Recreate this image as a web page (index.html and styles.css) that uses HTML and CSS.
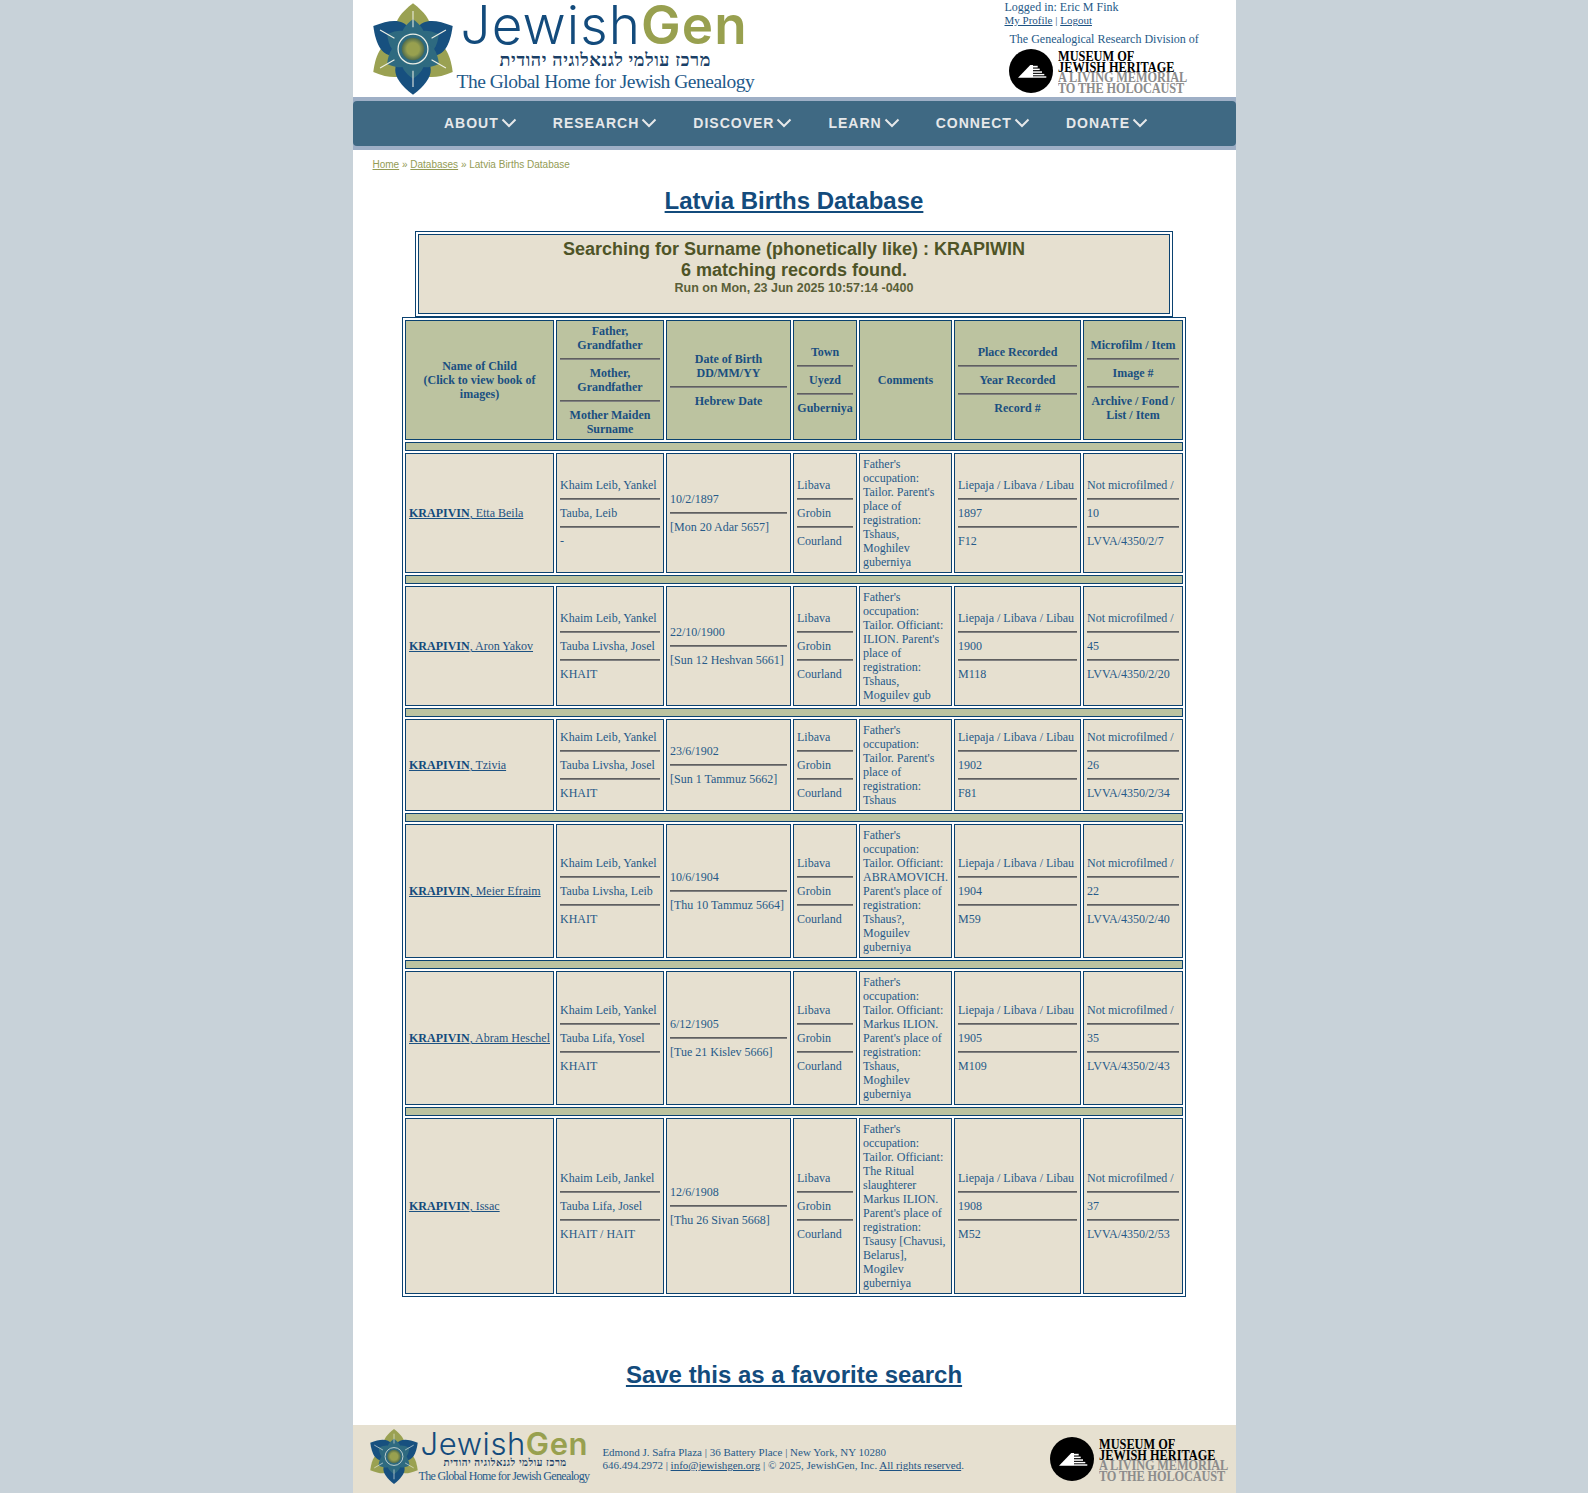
FILE: index.html
```html
<!DOCTYPE html>
<html lang="en">
  <head>
    <meta charset="UTF-8" />
    <meta name="viewport" content="width=device-width, initial-scale=1.0" />
    <title>Latvia Births Database</title>
    <link rel="stylesheet" href="styles.css">
  </head>
  <body>
    <svg class="defs" width="0" height="0" aria-hidden="true">
      <defs>
        <radialGradient id="seed">
          <stop offset="0.55" stop-color="#98a04f" />
          <stop offset="1" stop-color="#4f6a4c" />
        </radialGradient>
        <path id="petal" d="M0,0 C-23,-12 -23,-27 0,-44.5 C23,-27 23,-12 0,0 Z" />
        <path id="petal-inner" d="M0,0 C-15,-7 -15,-18 0,-29 C15,-18 15,-7 0,0 Z" />
        <symbol id="star" viewBox="5 3 80 92">
          <g transform="translate(45 49) scale(1.03)">
            <use href="#petal" fill="#9aa152" />
            <use href="#petal" fill="#9aa152" transform="rotate(120)" />
            <use href="#petal" fill="#9aa152" transform="rotate(240)" />
            <use href="#petal" fill="#17507f" transform="rotate(60)" />
            <use href="#petal" fill="#17507f" transform="rotate(180)" />
            <use href="#petal" fill="#17507f" transform="rotate(300)" />
            <use href="#petal-inner" fill="#2e6a80" />
            <use href="#petal-inner" fill="#2e6a80" transform="rotate(60)" />
            <use href="#petal-inner" fill="#2e6a80" transform="rotate(120)" />
            <use href="#petal-inner" fill="#2e6a80" transform="rotate(180)" />
            <use href="#petal-inner" fill="#2e6a80" transform="rotate(240)" />
            <use href="#petal-inner" fill="#2e6a80" transform="rotate(300)" />
            <g stroke="#eef0e6" stroke-width="1">
              <line x1="0" y1="-21" x2="0" y2="-37" />
              <line x1="18" y1="-10.5" x2="32" y2="-18.5" />
              <line x1="18" y1="10.5" x2="32" y2="18.5" />
              <line x1="0" y1="21" x2="0" y2="37" />
              <line x1="-18" y1="10.5" x2="-32" y2="18.5" />
              <line x1="-18" y1="-10.5" x2="-32" y2="-18.5" />
            </g>
            <circle r="14.5" fill="#2e6a80" stroke="#eef0e6" stroke-width="1.2" />
            <circle r="11" fill="url(#seed)" />
          </g>
        </symbol>
        <symbol id="steps" viewBox="0 0 44 44">
          <circle cx="22" cy="22" r="22" fill="#000" />
          <path fill="#fff" d="M9,28.7 L21.3,16 H24 V28.7 Z" />
          <g fill="#fff">
            <rect x="24" y="16.8" width="4.7" height="1.7" />
            <rect x="24" y="19.6" width="6.7" height="1.5" />
            <rect x="24" y="22.3" width="9" height="1.5" />
            <rect x="24" y="24.9" width="11.3" height="1.4" />
            <rect x="24" y="27.3" width="13.3" height="1.4" />
          </g>
        </symbol>
      </defs>
    </svg>

    <div class="page">
      <header class="top">
        <a class="logo" href="#">
          <svg class="logo-star"><use href="#star" /></svg>
          <span class="logo-text">
            <span class="logo-name">Jewish<b>Gen</b></span>
            <span class="logo-hebrew" lang="he" dir="rtl">מרכז עולמי לגנאלוגיה יהודית</span>
            <span class="logo-tag">The Global Home for Jewish Genealogy</span>
          </span>
        </a>
        <div class="user-box">
          <div class="user-name">Logged in: Eric M Fink</div>
          <div class="user-links"><a href="#">My Profile</a> | <a href="#">Logout</a></div>
          <div class="division">The Genealogical Research Division of</div>
          <div class="museum">
            <svg class="museum-mark"><use href="#steps" /></svg>
            <div class="museum-text">
              <div>MUSEUM OF</div>
              <div>JEWISH HERITAGE</div>
              <div class="museum-grey">A LIVING MEMORIAL</div>
              <div class="museum-grey">TO THE HOLOCAUST</div>
            </div>
          </div>
        </div>
      </header>

      <div class="nav-band">
        <nav class="nav">
          <a href="#">ABOUT<svg class="chev" viewBox="0 0 16 10"><path d="M1.5 1.5 L8 8 L14.5 1.5" /></svg></a>
          <a href="#">RESEARCH<svg class="chev" viewBox="0 0 16 10"><path d="M1.5 1.5 L8 8 L14.5 1.5" /></svg></a>
          <a href="#">DISCOVER<svg class="chev" viewBox="0 0 16 10"><path d="M1.5 1.5 L8 8 L14.5 1.5" /></svg></a>
          <a href="#">LEARN<svg class="chev" viewBox="0 0 16 10"><path d="M1.5 1.5 L8 8 L14.5 1.5" /></svg></a>
          <a href="#">CONNECT<svg class="chev" viewBox="0 0 16 10"><path d="M1.5 1.5 L8 8 L14.5 1.5" /></svg></a>
          <a href="#">DONATE<svg class="chev" viewBox="0 0 16 10"><path d="M1.5 1.5 L8 8 L14.5 1.5" /></svg></a>
        </nav>
      </div>

      <div class="crumbs"><a href="#">Home</a> » <a href="#">Databases</a> » Latvia Births Database</div>

      <h1 class="big-link"><a href="#">Latvia Births Database</a></h1>

      <table class="search-box">
        <tr>
          <td>
            <div class="search-big">Searching for Surname (phonetically like) : KRAPIWIN</div>
            <div class="search-big">6 matching records found.</div>
            <div class="search-small">Run on Mon, 23 Jun 2025 10:57:14 -0400</div>
          </td>
        </tr>
      </table>

      <table class="results">
        <colgroup>
          <col class="c1" /><col class="c2" /><col class="c3" /><col class="c4" /><col class="c5" /><col class="c6" /><col class="c7" />
        </colgroup>
        <tr>
          <th>Name of Child<br />(Click to view book of images)</th>
          <th>Father,<br />Grandfather<hr />Mother,<br />Grandfather<hr />Mother Maiden Surname</th>
          <th>Date of Birth<br />DD/MM/YY<hr />Hebrew Date</th>
          <th>Town<hr />Uyezd<hr />Guberniya</th>
          <th>Comments</th>
          <th>Place Recorded<hr />Year Recorded<hr />Record #</th>
          <th>Microfilm / Item<hr />Image #<hr />Archive / Fond / List / Item</th>
        </tr>
        <tr class="spacer"><td colspan="7"></td></tr>
        <tr>
          <td><a href="#"><b>KRAPIVIN</b>, Etta Beila</a></td>
          <td>Khaim Leib, Yankel<hr />Tauba, Leib<hr />-</td>
          <td>10/2/1897<hr />[Mon 20 Adar 5657]</td>
          <td>Libava<hr />Grobin<hr />Courland</td>
          <td>Father's occupation: Tailor. Parent's place of registration: Tshaus, Moghilev guberniya</td>
          <td>Liepaja / Libava / Libau<hr />1897<hr />F12</td>
          <td>Not microfilmed /<hr />10<hr />LVVA/4350/2/7</td>
        </tr>
        <tr class="spacer"><td colspan="7"></td></tr>
        <tr>
          <td><a href="#"><b>KRAPIVIN</b>, Aron Yakov</a></td>
          <td>Khaim Leib, Yankel<hr />Tauba Livsha, Josel<hr />KHAIT</td>
          <td>22/10/1900<hr />[Sun 12 Heshvan 5661]</td>
          <td>Libava<hr />Grobin<hr />Courland</td>
          <td>Father's occupation: Tailor. Officiant: ILION. Parent's place of registration: Tshaus, Moguilev gub</td>
          <td>Liepaja / Libava / Libau<hr />1900<hr />M118</td>
          <td>Not microfilmed /<hr />45<hr />LVVA/4350/2/20</td>
        </tr>
        <tr class="spacer"><td colspan="7"></td></tr>
        <tr>
          <td><a href="#"><b>KRAPIVIN</b>, Tzivia</a></td>
          <td>Khaim Leib, Yankel<hr />Tauba Livsha, Josel<hr />KHAIT</td>
          <td>23/6/1902<hr />[Sun 1 Tammuz 5662]</td>
          <td>Libava<hr />Grobin<hr />Courland</td>
          <td>Father's occupation: Tailor. Parent's place of registration: Tshaus</td>
          <td>Liepaja / Libava / Libau<hr />1902<hr />F81</td>
          <td>Not microfilmed /<hr />26<hr />LVVA/4350/2/34</td>
        </tr>
        <tr class="spacer"><td colspan="7"></td></tr>
        <tr>
          <td><a href="#"><b>KRAPIVIN</b>, Meier Efraim</a></td>
          <td>Khaim Leib, Yankel<hr />Tauba Livsha, Leib<hr />KHAIT</td>
          <td>10/6/1904<hr />[Thu 10 Tammuz 5664]</td>
          <td>Libava<hr />Grobin<hr />Courland</td>
          <td>Father's occupation: Tailor. Officiant: ABRAMOVICH. Parent's place of registration: Tshaus?, Moguilev guberniya</td>
          <td>Liepaja / Libava / Libau<hr />1904<hr />M59</td>
          <td>Not microfilmed /<hr />22<hr />LVVA/4350/2/40</td>
        </tr>
        <tr class="spacer"><td colspan="7"></td></tr>
        <tr>
          <td><a href="#"><b>KRAPIVIN</b>, Abram Heschel</a></td>
          <td>Khaim Leib, Yankel<hr />Tauba Lifa, Yosel<hr />KHAIT</td>
          <td>6/12/1905<hr />[Tue 21 Kislev 5666]</td>
          <td>Libava<hr />Grobin<hr />Courland</td>
          <td>Father's occupation: Tailor. Officiant: Markus ILION. Parent's place of registration: Tshaus, Moghilev guberniya</td>
          <td>Liepaja / Libava / Libau<hr />1905<hr />M109</td>
          <td>Not microfilmed /<hr />35<hr />LVVA/4350/2/43</td>
        </tr>
        <tr class="spacer"><td colspan="7"></td></tr>
        <tr>
          <td><a href="#"><b>KRAPIVIN</b>, Issac</a></td>
          <td>Khaim Leib, Jankel<hr />Tauba Lifa, Josel<hr />KHAIT / HAIT</td>
          <td>12/6/1908<hr />[Thu 26 Sivan 5668]</td>
          <td>Libava<hr />Grobin<hr />Courland</td>
          <td>Father's occupation: Tailor. Officiant: The Ritual slaughterer Markus ILION. Parent's place of registration: Tsausy [Chavusi, Belarus], Mogilev guberniya</td>
          <td>Liepaja / Libava / Libau<hr />1908<hr />M52</td>
          <td>Not microfilmed /<hr />37<hr />LVVA/4350/2/53</td>
        </tr>
      </table>

      <h2 class="big-link save-link"><a href="#">Save this as a favorite search</a></h2>

      <footer class="foot">
        <a class="logo logo-small" href="#">
          <svg class="logo-star"><use href="#star" /></svg>
          <span class="logo-text">
            <span class="logo-name">Jewish<b>Gen</b></span>
            <span class="logo-hebrew" lang="he" dir="rtl">מרכז עולמי לגנאלוגיה יהודית</span>
            <span class="logo-tag">The Global Home for Jewish Genealogy</span>
          </span>
        </a>
        <div class="foot-text">
          <div>Edmond J. Safra Plaza | 36 Battery Place | New York, NY 10280</div>
          <div>646.494.2972 | <a href="#">info@jewishgen.org</a> | © 2025, JewishGen, Inc. <a href="#">All rights reserved</a>.</div>
        </div>
        <div class="museum foot-museum">
          <svg class="museum-mark"><use href="#steps" /></svg>
          <div class="museum-text">
            <div>MUSEUM OF</div>
            <div>JEWISH HERITAGE</div>
            <div class="museum-grey">A LIVING MEMORIAL</div>
            <div class="museum-grey">TO THE HOLOCAUST</div>
          </div>
        </div>
      </footer>
    </div>
  </body>
</html>
```

FILE: styles.css
```css
body {
  margin: 0;
  background-color: #c8d2d9;
  font-family: "Liberation Serif", serif;
  color: #265a88;
}
a {
  color: #1d5282;
}
.defs {
  position: absolute;
}
.page {
  width: 883px;
  margin: 0 auto;
  background-color: #fff;
}

/* header */
.top {
  display: flex;
  justify-content: space-between;
  height: 97px;
}
.logo {
  display: flex;
  padding: 3px 0 0 20px;
  text-decoration: none;
}
.logo-star {
  width: 80px;
  height: 92px;
  flex: none;
}
.logo-text {
  display: flex;
  flex-direction: column;
  margin-left: 4px;
}
.logo-name {
  padding-left: 4px;
  font-family: Inter, sans-serif;
  font-weight: 300;
  font-size: 53px;
  line-height: 44px;
  letter-spacing: 1.1px;
  color: #134b7c;
}
.logo-name b {
  font-weight: 600;
  color: #98a04f;
}
.logo-hebrew {
  align-self: flex-start;
  margin: 3px 0 0 43px;
  font-family: "Liberation Serif", serif;
  font-weight: bold;
  font-size: 18px;
  line-height: 20px;
  letter-spacing: 0.6px;
  color: #1a3f66;
}
.logo-tag {
  margin-top: 1px;
  font-family: "Liberation Serif", serif;
  font-size: 19.5px;
  line-height: 22px;
  letter-spacing: -0.5px;
  white-space: nowrap;
  color: #1f5a8a;
}
.user-box {
  width: 231px;
  font-size: 12px;
  line-height: 14px;
}
.user-links {
  font-size: 11px;
  line-height: 13px;
}
.division {
  margin: 5px 0 0 5px;
}
.museum {
  display: flex;
  align-items: center;
  margin: 2px 0 0 4px;
}
.museum-mark {
  width: 44px;
  height: 44px;
  flex: none;
}
.museum-text {
  margin: 4px -18px 0 5px;
  font-weight: bold;
  font-size: 14px;
  line-height: 10.5px;
  color: #000;
  white-space: nowrap;
  transform: scaleX(0.88);
  transform-origin: left;
}
.museum-grey {
  letter-spacing: -0.15px;
  color: #8c8c8c;
}

/* nav */
.nav-band {
  padding: 4px 0;
  background-color: #9eafc6;
}
.nav {
  display: flex;
  justify-content: center;
  align-items: center;
  gap: 36px;
  height: 43px;
  padding: 0 0 2px 4px;
  background-color: #3f6983;
  border-radius: 4px;
}
.nav a {
  display: flex;
  align-items: center;
  gap: 2px;
  font-family: "Liberation Sans", Arial, sans-serif;
  font-weight: bold;
  font-size: 14px;
  letter-spacing: 1px;
  color: #e6e8ea;
  text-decoration: none;
}
.chev {
  width: 16px;
  height: 10px;
  fill: none;
  stroke: #e6e8ea;
  stroke-width: 2;
}

/* main */
.crumbs {
  margin: 9px 0 0 20px;
  font-family: "Liberation Sans", Arial, sans-serif;
  font-size: 10px;
  line-height: 12px;
  color: #939b54;
}
.crumbs a {
  color: #939b54;
}
.big-link {
  margin: 16px 0 16px;
  font-family: "Liberation Sans", Arial, sans-serif;
  font-weight: bold;
  font-size: 24px;
  line-height: 28px;
  text-align: center;
}
.big-link a {
  color: #134b7c;
}
.save-link {
  margin: 64px 0 36px;
}
.search-box {
  width: 758px;
  height: 86px;
  margin: 0 auto;
  border: 1px solid #0b4270;
  border-spacing: 2px;
}
.search-box td {
  height: 80px;
  padding: 4px 3px 3px;
  box-sizing: border-box;
  border: 1px solid #0b4270;
  background-color: #e6e0d0;
  vertical-align: top;
  text-align: center;
  font-family: "Liberation Sans", Arial, sans-serif;
  font-weight: bold;
  color: #4e5427;
}
.search-big {
  font-size: 18px;
  line-height: 21px;
}
.search-small {
  font-size: 12.5px;
  line-height: 14px;
  color: #5a5f38;
}
.results {
  table-layout: fixed;
  width: 784px;
  margin: 0 auto;
  border: 1px solid #0b4270;
  border-spacing: 2px;
  font-size: 12px;
  line-height: 14px;
}
.c1 { width: 149px; }
.c2 { width: 108px; }
.c3 { width: 125px; }
.c4 { width: 64px; }
.c5 { width: 93px; }
.c6 { width: 127px; }
.c7 { width: 100px; }
.results th,
.results td {
  padding: 3px;
  border: 1px solid #0b4270;
}
.results th {
  background-color: #bcc3a0;
  color: #1a4f80;
}
.results td {
  background-color: #e6e0d0;
}
.results b {
  color: #134b7c;
}
.results hr {
  margin: 6px 0;
  border: 0;
  border-top: 1px solid #5f5f5f;
  border-bottom: 1px solid #808080;
}
.results .spacer td {
  height: 9px;
  padding: 0;
  box-sizing: border-box;
  background-color: #bcc3a0;
}

/* footer */
.foot {
  display: flex;
  align-items: center;
  height: 68px;
  background-color: #e6e0d0;
}
.logo-small {
  padding: 0 0 5px 17px;
  align-items: center;
}
.logo-small .logo-star {
  width: 48px;
  height: 55px;
}
.logo-small .logo-text {
  margin-left: 1px;
}
.logo-small .logo-name {
  padding-left: 2px;
  font-size: 31px;
  line-height: 27px;
  letter-spacing: 0.6px;
}
.logo-small .logo-hebrew {
  margin: 0 0 0 25px;
  font-size: 10px;
  line-height: 12px;
  letter-spacing: 0.55px;
}
.logo-small .logo-tag {
  margin-top: 0;
  font-size: 12px;
  line-height: 14px;
  letter-spacing: -0.65px;
}
.foot-text {
  margin-left: 13px;
  font-size: 11px;
  line-height: 13px;
}
.foot-museum {
  margin: 0 0 0 auto;
  padding-right: 8px;
}
```
